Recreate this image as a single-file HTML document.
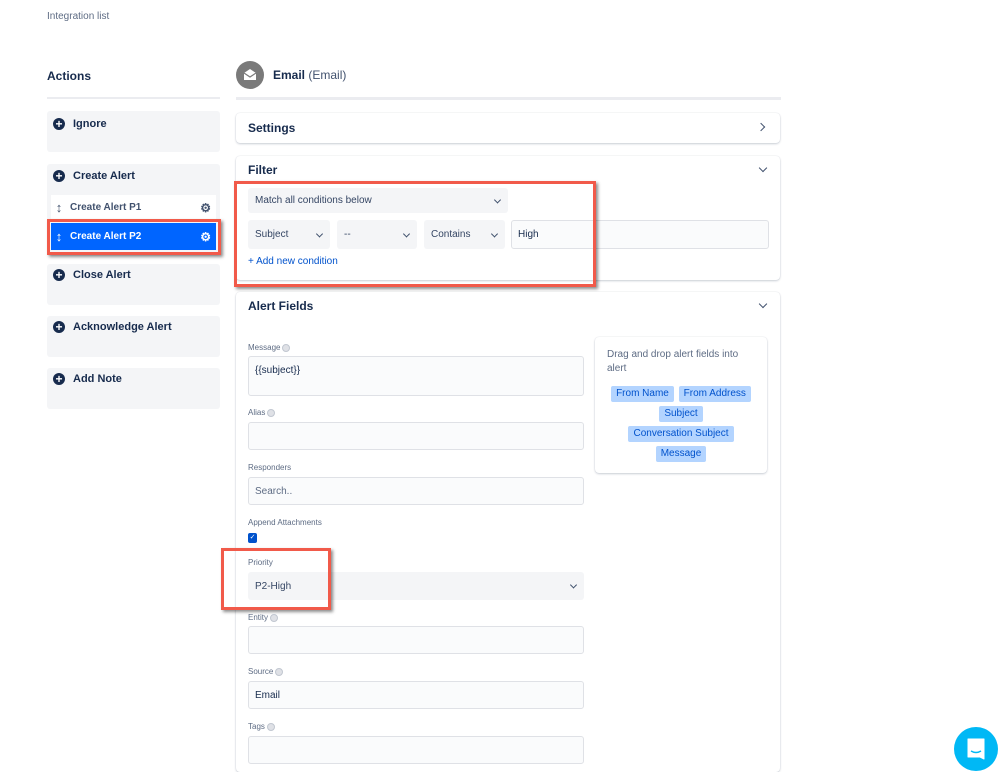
<!DOCTYPE html>
<html><head><meta charset="utf-8"><style>
*{box-sizing:border-box;margin:0;padding:0}
body{width:998px;height:766px;overflow:hidden;background:#fff;font-family:"Liberation Sans",sans-serif;color:#172b4d;position:relative}
.a{position:absolute}
.box{position:absolute;left:47px;width:173px;background:#f4f5f7;border-radius:3px}
.act{position:absolute;left:6px;top:7px;font-size:11px;font-weight:bold;display:flex;align-items:center}
.plus{width:12px;height:12px;border-radius:50%;background:#172b4d;color:#fff;font-size:12px;line-height:12px;text-align:center;margin-right:8px;font-weight:bold}
.card{position:absolute;left:236px;width:544px;background:#fff;border-radius:4px;box-shadow:0 1px 2px rgba(9,30,66,.2),0 0 1px rgba(9,30,66,.15)}
.ct{position:absolute;left:12px;font-size:12px;font-weight:bold}
.sel{position:absolute;background:#f4f5f7;border-radius:3px;font-size:10px;color:#344563;padding-left:7px;display:flex;align-items:center}
.sel .cv{position:absolute;right:8px;top:50%;width:5px;height:5px;border-right:1.3px solid #42526e;border-bottom:1.3px solid #42526e;transform:translateY(-70%) rotate(45deg)}
.inp{position:absolute;left:248px;width:336px;background:#fafbfc;border:1.5px solid #dfe1e6;border-radius:3px;font-size:10px;padding-left:6px;display:flex;align-items:center}
.lbl{position:absolute;left:248px;font-size:8px;color:#5e6c84;display:flex;align-items:center}
.q{display:inline-block;width:8px;height:8px;border-radius:50%;background:#dfe1e6;border:1px solid #c1c7d0;margin-left:2px}
.tag{display:inline-block;background:#b3d4ff;color:#0052cc;font-size:10px;padding:1px 5px;border-radius:2px;margin:2px 1px}
.red{position:absolute;border:3px solid #f15a4a;box-shadow:2px 2px 3px rgba(0,0,0,.45)}
.arr{display:inline-block;width:10px;margin-right:6px;font-size:13px;font-weight:bold;text-align:center}
</style></head><body>
<div class="a" style="left:47px;top:11px;font-size:10px;color:#5e6c84">Integration list</div>
<div class="a" style="left:47px;top:69px;font-size:12px;font-weight:bold">Actions</div>
<div class="a" style="left:47px;top:97px;width:173px;height:2px;background:#ebecf0"></div>

<div class="box" style="top:111px;height:41px"><div class="act"><span class="plus">+</span>Ignore</div></div>
<div class="box" style="top:164px;height:92px"><div class="act" style="top:6px"><span class="plus">+</span>Create Alert</div></div>
<div class="a" style="left:51px;top:195px;width:165px;height:25px;background:#fff;font-size:10px;font-weight:bold;color:#42526e;display:flex;align-items:center;padding-left:3px"><span class="arr">↕</span>Create Alert P1<span style="position:absolute;right:5px;font-size:12px">⚙</span></div>
<div class="a" style="left:51px;top:223px;width:165px;height:27px;background:#0065ff;color:#fff;font-size:10px;font-weight:bold;display:flex;align-items:center;padding-left:3px"><span class="arr">↕</span>Create Alert P2<span style="position:absolute;right:5px;font-size:12px">⚙</span></div>
<div class="red" style="left:47px;top:219px;width:174px;height:36px"></div>
<div class="box" style="top:264px;height:41px"><div class="act" style="top:5px"><span class="plus">+</span>Close Alert</div></div>
<div class="box" style="top:316px;height:41px"><div class="act" style="top:5px"><span class="plus">+</span>Acknowledge Alert</div></div>
<div class="box" style="top:368px;height:41px"><div class="act" style="top:5px"><span class="plus">+</span>Add Note</div></div>

<svg class="a" style="left:236px;top:61px" width="28" height="28" viewBox="0 0 28 28"><circle cx="14" cy="14" r="14" fill="#7a7a7a"/><path d="M8 12 L14 8 L20 12 V19 H8 Z" fill="#fff"/><path d="M8 12 L14 16 L20 12" fill="none" stroke="#7a7a7a" stroke-width="1.2"/></svg>
<div class="a" style="left:273px;top:68px;font-size:12px"><b>Email</b> <span style="color:#42526e">(Email)</span></div>
<div class="a" style="left:236px;top:97px;width:545px;height:3px;background:#ebecf0"></div>

<div class="card" style="top:113px;height:30px"><div class="ct" style="top:8px">Settings</div><div class="a" style="right:16px;top:11px;width:6px;height:6px;border-right:1.5px solid #42526e;border-bottom:1.5px solid #42526e;transform:rotate(-45deg)"></div></div>
<div class="card" style="top:156px;height:124px"><div class="ct" style="top:7px">Filter</div><div class="a" style="right:14px;top:9px;width:6px;height:6px;border-right:1.5px solid #42526e;border-bottom:1.5px solid #42526e;transform:rotate(45deg)"></div></div>
<div class="sel" style="left:248px;top:188px;width:260px;height:25px">Match all conditions below<span class="cv"></span></div>
<div class="sel" style="left:248px;top:220px;width:82px;height:29px">Subject<span class="cv"></span></div>
<div class="sel" style="left:337px;top:220px;width:80px;height:29px">--<span class="cv"></span></div>
<div class="sel" style="left:424px;top:220px;width:81px;height:29px">Contains<span class="cv"></span></div>
<div class="inp" style="left:511px;width:258px;top:220px;height:29px">High</div>
<div class="a" style="left:248px;top:256px;font-size:10px;color:#0052cc">+ Add new condition</div>
<div class="red" style="left:234px;top:181px;width:362px;height:106px"></div>

<div class="card" style="top:292px;height:480px"><div class="ct" style="top:7px">Alert Fields</div><div class="a" style="right:14px;top:9px;width:6px;height:6px;border-right:1.5px solid #42526e;border-bottom:1.5px solid #42526e;transform:rotate(45deg)"></div></div>

<div class="lbl" style="top:343px">Message<span class="q"></span></div>
<div class="inp" style="top:356px;height:40px;align-items:flex-start;padding-top:8px">{{subject}}</div>
<div class="lbl" style="top:408px">Alias<span class="q"></span></div>
<div class="inp" style="top:422px;height:28px"></div>
<div class="lbl" style="top:463px">Responders</div>
<div class="inp" style="top:477px;height:28px;color:#5e6c84">Search..</div>
<div class="lbl" style="top:518px">Append Attachments</div>
<div class="a" style="left:248px;top:533px;width:9px;height:10px;background:#0052cc;border-radius:2px;color:#fff;font-size:7px;text-align:center;line-height:10px">✓</div>
<div class="lbl" style="top:558px">Priority</div>
<div class="sel" style="left:248px;top:572px;width:336px;height:28px;font-size:10px">P2-High<span class="cv"></span></div>
<div class="red" style="left:221px;top:548px;width:110px;height:62px"></div>
<div class="lbl" style="top:613px">Entity<span class="q"></span></div>
<div class="inp" style="top:626px;height:28px"></div>
<div class="lbl" style="top:667px">Source<span class="q"></span></div>
<div class="inp" style="top:681px;height:28px">Email</div>
<div class="lbl" style="top:722px">Tags<span class="q"></span></div>
<div class="inp" style="top:736px;height:28px"></div>

<div class="a" style="left:595px;top:337px;width:172px;height:136px;background:#fff;border-radius:4px;box-shadow:0 1px 2px rgba(9,30,66,.2),0 0 1px rgba(9,30,66,.15);padding:11px 12px;font-size:10px;color:#5e6c84;line-height:14px">Drag and drop alert fields into alert
<div style="text-align:center;margin-top:8px;line-height:14px"><span class="tag">From Name</span> <span class="tag">From Address</span><br><span class="tag">Subject</span><br><span class="tag">Conversation Subject</span><br><span class="tag">Message</span></div></div>

<svg class="a" style="left:953px;top:727px" width="45" height="45" viewBox="0 0 45 45"><circle cx="23" cy="22" r="22" fill="#00b8f5"/><path d="M15 12 H31 V32 L27 30 H15 Z" fill="#fff" stroke="#fff" stroke-linejoin="round"/><path d="M18 24 Q23 27 28 24" fill="none" stroke="#00b8f5" stroke-width="1.5"/></svg>
</body></html>
